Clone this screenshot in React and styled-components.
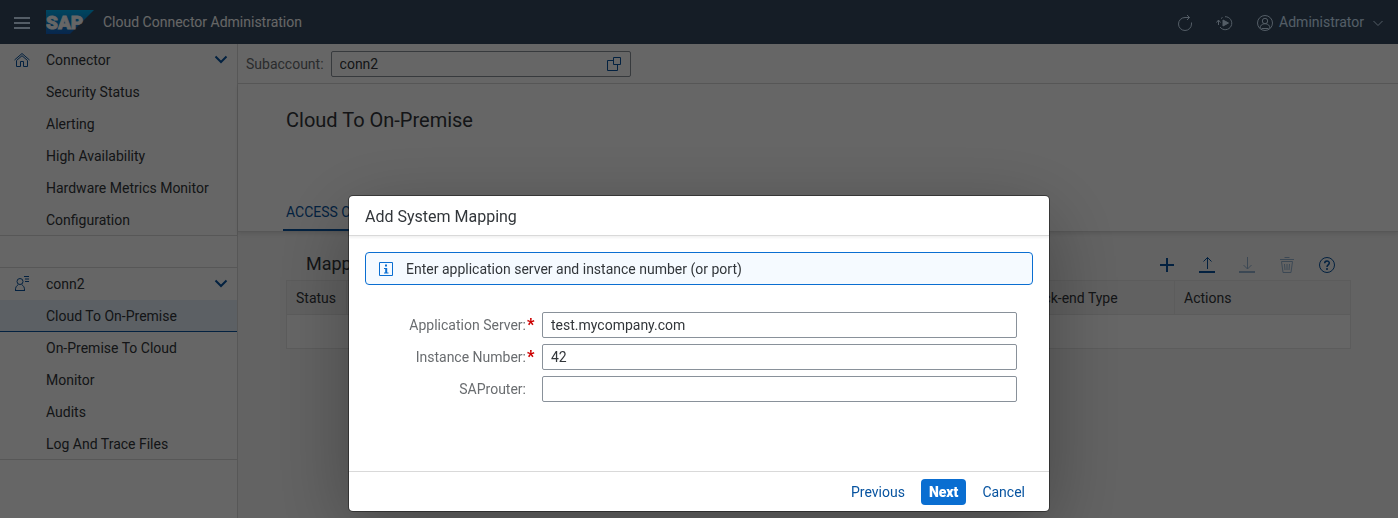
import React from "react";
import styled, { createGlobalStyle } from "styled-components";

const GlobalStyle = createGlobalStyle`
  *, *::before, *::after { box-sizing: border-box; }
  body {
    margin: 0;
    background: #f7f7f7;
    color: #32363a;
    font: 14px/20px Roboto, "Liberation Sans", sans-serif;
  }
  button, input { font: inherit; color: inherit; }
  h1, h2, ul { margin: 0; padding: 0; font-weight: 400; }
  ul { list-style: none; }
  svg { display: block; flex: none; }
`;

const Page = styled.div`
  min-height: 100vh;
  display: flex;
  flex-direction: column;
`;

const ShellBar = styled.header`
  height: 44px;
  padding: 0 11px 0 13px;
  display: flex;
  align-items: center;
  background: #354a5f;
  color: #d1e8ff;
`;

const ShellTitle = styled.h1`
  flex: 1;
  margin-left: 9px;
  font-size: 14px;
  color: #fff;
`;

const ShellActions = styled.div`
  display: flex;
  align-items: center;
  gap: 22px;
`;

const PlainButton = styled.button`
  display: flex;
  align-items: center;
  gap: 5px;
  padding: 0;
  border: 0;
  background: none;
  cursor: pointer;
`;

const MenuButton = styled(PlainButton)`
  margin-right: 15px;
`;

const Columns = styled.div`
  flex: 1;
  display: flex;
`;

const Sidebar = styled.nav`
  flex: none;
  width: 238px;
  background: #fff;
  border-right: 1px solid #d9d9d9;
`;

const NavGroup = styled.ul`
  border-bottom: 1px solid #d9d9d9;
  & + & {
    margin-top: 31px;
    border-top: 1px solid #d9d9d9;
  }
`;

const NavHeader = styled.button`
  width: 100%;
  height: 32px;
  padding: 0 7px 0 13px;
  display: flex;
  align-items: center;
  border: 0;
  background: none;
  color: #0854a0;
  text-align: left;
  cursor: pointer;
`;

const NavName = styled.span`
  flex: 1;
  margin-left: 15px;
  color: #32363a;
`;

const NavLink = styled.a`
  height: ${(p) => (p.$last ? 31 : 32)}px;
  padding-left: 46px;
  display: flex;
  align-items: center;
  color: #32363a;
  text-decoration: none;
  background: ${(p) => (p.$selected ? "#e5f0fa" : "transparent")};
  box-shadow: ${(p) => (p.$selected ? "inset 0 -1px #0854a0" : "none")};
`;

const Main = styled.main`
  flex: 1;
  min-width: 0;
`;

const AccountBar = styled.div`
  height: 40px;
  padding: 0 8px;
  display: flex;
  align-items: center;
  gap: 7px;
  background: #fff;
  border-bottom: 1px solid #d9d9d9;
  color: #6a6d70;
`;

const AccountField = styled.div`
  width: 300px;
  height: 26px;
  padding-right: 8px;
  display: flex;
  align-items: center;
  border: 1px solid #89919a;
  border-radius: 2px;
  color: #0854a0;
`;

const AccountInput = styled.input`
  flex: 1;
  min-width: 0;
  padding: 0 8px;
  border: 0;
  outline: 0;
  background: none;
  color: #32363a;
`;

const PageHeader = styled.div`
  height: 148px;
  padding: 22px 48px 0 45px;
  display: flex;
  flex-direction: column;
  justify-content: space-between;
  background: #fff;
  border-bottom: 1px solid #d9d9d9;
  box-shadow: 0 2px 4px rgba(0, 0, 0, 0.1);
`;

const PageTitle = styled.h2`
  margin-left: 3px;
  font-size: 20px;
  line-height: 28px;
`;

const Tab = styled.button`
  align-self: flex-start;
  height: 38px;
  padding: 0 3px;
  border: 0;
  background: none;
  box-shadow: inset 0 -2px #0854a0;
  color: #0854a0;
`;

const Section = styled.section`
  padding: 16px 47px 0 48px;
`;

const Toolbar = styled.div`
  height: 32px;
  padding: 0 15px 0 20px;
  display: flex;
  align-items: center;
  justify-content: space-between;
`;

const ToolbarTitle = styled.h2`
  font-size: 18px;
  line-height: 24px;
`;

const ToolbarActions = styled.div`
  display: flex;
  gap: 22px;
  padding-top: 2px;
  color: #0854a0;
`;

const ToolButton = styled(PlainButton)`
  opacity: ${(p) => (p.disabled ? 0.4 : 1)};
`;

const Table = styled.table`
  width: 100%;
  table-layout: fixed;
  border-collapse: collapse;
  border: 1px solid #e5e5e5;
  background: #fff;
`;

const HeadCell = styled.th`
  height: 34px;
  width: ${(p) => p.$width || "auto"};
  padding: 0 9px;
  border: 1px solid #e5e5e5;
  background: #f2f2f2;
  font-weight: 400;
  text-align: left;
  white-space: nowrap;
`;

const EmptyCell = styled.td`
  height: 34px;
  padding: 0;
`;

const Backdrop = styled.div`
  position: fixed;
  inset: 0;
  padding-top: 196px;
  display: flex;
  align-items: flex-start;
  justify-content: center;
  background: rgba(0, 0, 0, 0.6);
`;

const Dialog = styled.div`
  width: 700px;
  max-width: 100%;
  background: #fff;
  border-radius: 4px;
  box-shadow: 0 0 0 1px rgba(0, 0, 0, 0.42), 0 20px 80px rgba(0, 0, 0, 0.3);
`;

const DialogHeader = styled.div`
  height: 40px;
  padding: 2px 16px 0;
  display: flex;
  align-items: center;
  border-bottom: 1px solid #d9d9d9;
  box-shadow: 0 2px 2px rgba(0, 0, 0, 0.05);
`;

const DialogTitle = styled.h2`
  font-size: 16px;
  line-height: 24px;
`;

const DialogBody = styled.div`
  padding: 16px 16px 69px;
`;

const MessageStrip = styled.div`
  height: 33px;
  padding: 0 12px;
  display: flex;
  align-items: center;
  gap: 12px;
  border: 1px solid #0a6ed1;
  border-radius: 4px;
  background: #f5faff;
`;

const Form = styled.form`
  margin-top: 27px;
  padding-right: 16px;
  display: grid;
  grid-template-columns: 169px minmax(0, 1fr);
  gap: 6px 8px;
`;

const Label = styled.label`
  display: flex;
  align-items: center;
  justify-content: flex-end;
  color: #6a6d70;
`;

const Mark = styled.span`
  width: 8px;
  padding-left: 1px;
  color: #c00;
  font-size: 16px;
  font-weight: 900;
`;

const Field = styled.input`
  height: 26px;
  width: 100%;
  padding: 0 8px;
  border: 1px solid #89919a;
  border-radius: 2px;
  background: #fff;
  outline: 0;
`;

const DialogFooter = styled.div`
  height: 40px;
  padding: 1px 16px 0;
  display: flex;
  align-items: center;
  justify-content: flex-end;
  gap: 8px;
  border-top: 1px solid #d9d9d9;
`;

const ActionButton = styled.button`
  height: 26px;
  padding: 0 8px;
  border: 0;
  border-radius: 4px;
  background: ${(p) => (p.$primary ? "#0a6ed1" : "transparent")};
  color: ${(p) => (p.$primary ? "#fff" : "#0854a0")};
  font-weight: ${(p) => (p.$primary ? 900 : 400)};
  cursor: pointer;
`;

const InfoMark = styled.span`
  color: #0a6ed1;
`;

const Icon = ({ size = 18, stroke = 1, children }) => (
  <svg
    width={size}
    height={size}
    viewBox={`0 0 ${size} ${size}`}
    fill="none"
    stroke="currentColor"
    strokeWidth={stroke}
    aria-hidden="true"
  >
    {children}
  </svg>
);

const MenuIcon = () => (
  <Icon stroke={2}>
    <path d="M1 5h16M1 10h16M1 15h16" />
  </Icon>
);

const Logo = () => (
  <svg width="48" height="24" viewBox="0 0 48 24" role="img" aria-label="SAP">
    <defs>
      <linearGradient id="logoFill" x1="0" y1="0" x2="0" y2="1">
        <stop offset="0" stopColor="#00aeef" />
        <stop offset="0.5" stopColor="#0a85d1" />
        <stop offset="1" stopColor="#1661be" />
      </linearGradient>
    </defs>
    <path d="M0 0h48L24 24H0z" fill="url(#logoFill)" />
    <text
      x="0"
      y="19"
      fill="#fff"
      stroke="#fff"
      strokeWidth="0.8"
      fontFamily="Roboto, sans-serif"
      fontSize="19"
      fontWeight="900"
    >
      SAP
    </text>
  </svg>
);

const RefreshIcon = () => (
  <Icon>
    <path d="M13.500 4.500H9A6.500 6.500 0 1 0 15.500 11V9.500M11 2l2.500 2.500L11 7" />
  </Icon>
);

const ReplayIcon = () => (
  <Icon>
    <path d="M9 3.700a6.500 6.500 0 1 1-5 10.300M2.500 12V7M.5 9.500l2-2.500 2 2.500M5 5.500l1.500-1" />
    <path d="M7 7v6l5.500-3z" fill="currentColor" />
  </Icon>
);

const UserIcon = () => (
  <Icon>
    <circle cx="9" cy="10" r="7.500" />
    <circle cx="9" cy="8" r="2.700" />
    <path d="M4 15.300c.3-2.800 1.800-4.600 5-4.600s4.700 1.800 5 4.600M5.500 15.500h7" />
  </Icon>
);

const ThinChevron = () => (
  <Icon>
    <path d="M4.500 8l4.500 4.500L13.500 8" />
  </Icon>
);

const Chevron = () => (
  <Icon stroke={2}>
    <path d="M3.500 5.500L9 11l5.500-5.500" />
  </Icon>
);

const HomeIcon = () => (
  <Icon>
    <path d="M1.500 9L9 2.500 16.500 9M3.500 9.500L9 4.700l5.500 4.800v6h-4v-5h-3v5h-4z" />
  </Icon>
);

const AccountIcon = () => (
  <Icon>
    <circle cx="7" cy="6.500" r="3" />
    <path d="M2.500 15.500c-.2-3.500 1-4.500 2.800-6M11.500 15.500c.2-3.500-1-4.500-2.800-6M2 15.500h10M11 1.500h5M12 4h4M12 6.500h4" />
  </Icon>
);

const ValueHelpIcon = () => (
  <Icon size={16}>
    <path d="M7.500 1.500h7v7h-7zM7.500 4.500h-6v10h10v-6" />
  </Icon>
);

const AddIcon = () => (
  <Icon stroke={2}>
    <path d="M9 2v14M2 9h14" />
  </Icon>
);

const UploadIcon = () => (
  <Icon>
    <path d="M9.500 13V1.500M5.500 5.500l4-4 4 4" />
    <path d="M1 16h16" strokeWidth="2" />
  </Icon>
);

const DownloadIcon = () => (
  <Icon>
    <path d="M9.500 1v12M5.500 9l4 4 4-4" />
    <path d="M1 16h16" strokeWidth="2" />
  </Icon>
);

const TrashIcon = () => (
  <Icon>
    <path d="M2 3.500h14M6.500 1.500h5M3.500 5.500h11l-1.500 11H5zM6.500 8l.5 6M9 8v6M11.500 8l-.5 6" />
  </Icon>
);

const HelpIcon = () => (
  <Icon>
    <circle cx="9" cy="9" r="7.500" />
    <path d="M6.700 7.200c0-3 4.600-2.900 4.600-.2 0 1.800-2.300 1.900-2.300 3.900M9 12v2" strokeWidth="1.500" />
  </Icon>
);

const InfoIcon = () => (
  <Icon size={16}>
    <path d="M1.500 1.500h13v13h-13z" />
    <path d="M8 3.500v2" strokeWidth="2" />
    <path d="M8.200 7v5" strokeWidth="2" />
    <path d="M6 7.500h2M6 12h4.500" />
  </Icon>
);

const groups = [
  {
    name: "Connector",
    icon: <HomeIcon />,
    items: ["Security Status", "Alerting", "High Availability", "Hardware Metrics Monitor", "Configuration"],
  },
  {
    name: "conn2",
    icon: <AccountIcon />,
    items: ["Cloud To On-Premise", "On-Premise To Cloud", "Monitor", "Audits", "Log And Trace Files"],
  },
];

const tools = [
  { label: "Add", icon: <AddIcon /> },
  { label: "Upload", icon: <UploadIcon /> },
  { label: "Download", icon: <DownloadIcon />, disabled: true },
  { label: "Delete", icon: <TrashIcon />, disabled: true },
  { label: "Help", icon: <HelpIcon /> },
];

const fields = [
  { id: "server", label: "Application Server:", value: "test.mycompany.com", required: true },
  { id: "instance", label: "Instance Number:", value: "42", required: true },
  { id: "router", label: "SAProuter:", value: "" },
];

export default function App() {
  return (
    <>
      <GlobalStyle />
      <Page>
        <ShellBar>
          <MenuButton aria-label="Menu">
            <MenuIcon />
          </MenuButton>
          <Logo />
          <ShellTitle>Cloud Connector Administration</ShellTitle>
          <ShellActions>
            <PlainButton aria-label="Refresh">
              <RefreshIcon />
            </PlainButton>
            <PlainButton aria-label="Restart">
              <ReplayIcon />
            </PlainButton>
            <PlainButton>
              <UserIcon />
              Administrator
              <ThinChevron />
            </PlainButton>
          </ShellActions>
        </ShellBar>
        <Columns>
          <Sidebar>
            {groups.map((group) => (
              <NavGroup key={group.name}>
                <li>
                  <NavHeader>
                    {group.icon}
                    <NavName>{group.name}</NavName>
                    <Chevron />
                  </NavHeader>
                </li>
                {group.items.map((item, i) => (
                  <li key={item}>
                    <NavLink
                      href="#"
                      $selected={item === "Cloud To On-Premise"}
                      $last={i === group.items.length - 1}
                    >
                      {item}
                    </NavLink>
                  </li>
                ))}
              </NavGroup>
            ))}
          </Sidebar>
          <Main>
            <AccountBar>
              <label htmlFor="account">Subaccount:</label>
              <AccountField>
                <AccountInput id="account" defaultValue="conn2" />
                <PlainButton aria-label="Select subaccount">
                  <ValueHelpIcon />
                </PlainButton>
              </AccountField>
            </AccountBar>
            <PageHeader>
              <PageTitle>Cloud To On-Premise</PageTitle>
              <Tab>ACCESS CONTROL</Tab>
            </PageHeader>
            <Section>
              <Toolbar>
                <ToolbarTitle>Mapping</ToolbarTitle>
                <ToolbarActions>
                  {tools.map((tool) => (
                    <ToolButton key={tool.label} aria-label={tool.label} disabled={tool.disabled}>
                      {tool.icon}
                    </ToolButton>
                  ))}
                </ToolbarActions>
              </Toolbar>
              <Table>
                <thead>
                  <tr>
                    <HeadCell $width="60px">Status</HeadCell>
                    <HeadCell />
                    <HeadCell $width="157px">Back-end Type</HeadCell>
                    <HeadCell $width="176px">Actions</HeadCell>
                  </tr>
                </thead>
                <tbody>
                  <tr>
                    <EmptyCell colSpan={4} />
                  </tr>
                </tbody>
              </Table>
            </Section>
          </Main>
        </Columns>
      </Page>
      <Backdrop>
        <Dialog role="dialog" aria-modal="true" aria-labelledby="dialog-title">
          <DialogHeader>
            <DialogTitle id="dialog-title">Add System Mapping</DialogTitle>
          </DialogHeader>
          <DialogBody>
            <MessageStrip>
              <InfoMark>
                <InfoIcon />
              </InfoMark>
              Enter application server and instance number (or port)
            </MessageStrip>
            <Form>
              {fields.map((field) => (
                <React.Fragment key={field.id}>
                  <Label htmlFor={field.id}>
                    {field.label}
                    <Mark>{field.required ? "*" : ""}</Mark>
                  </Label>
                  <Field id={field.id} defaultValue={field.value} />
                </React.Fragment>
              ))}
            </Form>
          </DialogBody>
          <DialogFooter>
            <ActionButton>Previous</ActionButton>
            <ActionButton $primary>Next</ActionButton>
            <ActionButton>Cancel</ActionButton>
          </DialogFooter>
        </Dialog>
      </Backdrop>
    </>
  );
}
